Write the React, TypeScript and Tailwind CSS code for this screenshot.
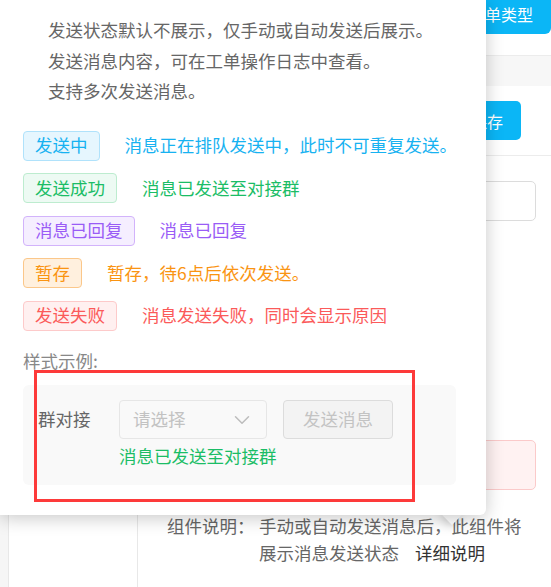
import React from 'react';
import { ChevronDown } from 'lucide-react';

type Status = {
  label: string;
  desc: string;
  tag: string;
  text: string;
};

const statuses: Status[] = [
  {
    label: '发送中',
    desc: '消息正在排队发送中，此时不可重复发送。',
    tag: 'bg-[#e6f6fe] border-[#b0e2fb] text-[#17b2f1]',
    text: 'text-[#17b2f1]',
  },
  {
    label: '发送成功',
    desc: '消息已发送至对接群',
    tag: 'bg-[#edfaf3] border-[#bdeccf] text-[#1bbd66]',
    text: 'text-[#1bbd66]',
  },
  {
    label: '消息已回复',
    desc: '消息已回复',
    tag: 'bg-[#f5eeff] border-[#d2b3fb] text-[#9a5cf6]',
    text: 'text-[#9a5cf6]',
  },
  {
    label: '暂存',
    desc: '暂存，待6点后依次发送。',
    tag: 'bg-[#fff0de] border-[#fbc78a] text-[#fa9412]',
    text: 'text-[#fa9412]',
  },
  {
    label: '发送失败',
    desc: '消息发送失败，同时会显示原因',
    tag: 'bg-[#fff0f0] border-[#fdcaca] text-[#fb5a5a]',
    text: 'text-[#fb5a5a]',
  },
];

const notes = [
  '发送状态默认不展示，仅手动或自动发送后展示。',
  '发送消息内容，可在工单操作日志中查看。',
  '支持多次发送消息。',
];

function BackgroundPage() {
  return (
    <div className="flex h-full w-full">
      <div className="w-[8px] bg-[#f6f6f6]" />
      <div className="w-[130px] border-x border-[#e8e8e8] bg-white" />
      <div className="flex flex-1 flex-col">
        <div className="flex h-[56px] justify-end border-b border-[#ececec]">
          <button className="-mt-[6px] flex h-[40px] items-center rounded-br-[6px] rounded-bl-[6px] bg-[#0bb6f6] pl-[18px] pr-[18px] text-[16px] text-white">
            工单类型
          </button>
        </div>
        <div className="h-[30px] bg-[#f7f7f7]" />
        <div className="flex h-[70px] items-center justify-end border-b border-[#ececec] pr-[30px]">
          <button className="flex h-[39px] items-center rounded-[5px] bg-[#0bb6f6] px-[18px] text-[16px] text-white">
            保存
          </button>
        </div>
        <div className="mt-[25px] flex justify-end pr-[15px]">
          <div className="h-[40px] w-[200px] rounded-[5px] border border-[#dcdcdc]" />
        </div>
        <div className="mt-[219px] flex justify-end pr-[15px]">
          <div className="h-[50px] w-[200px] rounded-[5px] border border-[#fbcaca] bg-[#fff2f2]" />
        </div>
        <div className="mt-[22px] flex pl-[29px] text-[17.5px] leading-[27px] text-[#666]">
          <div className="w-[92px] shrink-0">组件说明：</div>
          <div className="flex flex-col">
            <div>手动或自动发送消息后，此组件将</div>
            <div className="flex gap-[16px]">
              <span>展示消息发送状态</span>
              <span className="text-[#333]">详细说明</span>
            </div>
          </div>
        </div>
      </div>
    </div>
  );
}

function Popover() {
  return (
    <>
      <div className="absolute left-[445px] top-[508px] h-[14px] w-[14px] rotate-45 bg-white shadow-[0_2px_10px_rgba(0,0,0,0.2)]" />
      <div className="absolute left-0 top-0 h-[515px] w-[486px] rounded-br-[6px] bg-white shadow-[0_3px_18px_rgba(0,0,0,0.22)]">
        <div className="pl-[48px] pt-[15px] text-[17.5px] leading-[30.5px] text-[#666]">
          {notes.map((n) => (
            <div key={n}>{n}</div>
          ))}
        </div>

        <div className="mt-[24px] flex flex-col gap-[12.5px] pl-[23px] text-[17.5px]">
          {statuses.map((s) => (
            <div key={s.label} className="flex items-center">
              <span className={`flex h-[30px] items-center rounded-[4px] border px-[11px] ${s.tag}`}>
                {s.label}
              </span>
              <span className={`ml-[25px] ${s.text}`}>{s.desc}</span>
            </div>
          ))}
        </div>

        <div className="mt-[15px] pl-[23px] text-[17.5px] leading-[30.5px] text-[#888]">样式示例:</div>

        <div className="ml-[23px] mt-[9px] h-[100px] w-[433px] rounded-[6px] bg-[#f9f9f9] pl-[15px] pt-[15px]">
          <div className="flex items-center text-[17.5px]">
            <span className="w-[81px] text-[#666]">群对接</span>
            <div className="flex h-[39px] w-[148px] items-center justify-between rounded-[4px] border border-[#e6e6e6] bg-[#f9f9f9] pl-[13px] pr-[11px] text-[#c2c2c2]">
              <span>请选择</span>
              <ChevronDown size={26} strokeWidth={1.4} className="text-[#bdbdbd]" />
            </div>
            <button className="ml-[16px] flex h-[39px] w-[110px] items-center justify-center rounded-[4px] border border-[#dcdcdc] bg-[#f3f3f3] text-[#c3c3c3]">
              发送消息
            </button>
          </div>
          <div className="ml-[81px] mt-[5px] text-[17.5px] leading-[24px] text-[#1bbd66]">消息已发送至对接群</div>
        </div>

        <div className="absolute left-[34px] top-[370px] h-[132px] w-[381px] border-[3px] border-[#fd3a3a]" />
      </div>
    </>
  );
}

export default function App() {
  return (
    <div
      className="relative h-[587px] w-[551px] overflow-hidden bg-white"
      style={{ fontFamily: '"Noto Sans CJK SC", "Noto Sans", sans-serif' }}
    >
      <BackgroundPage />
      <Popover />
    </div>
  );
}
